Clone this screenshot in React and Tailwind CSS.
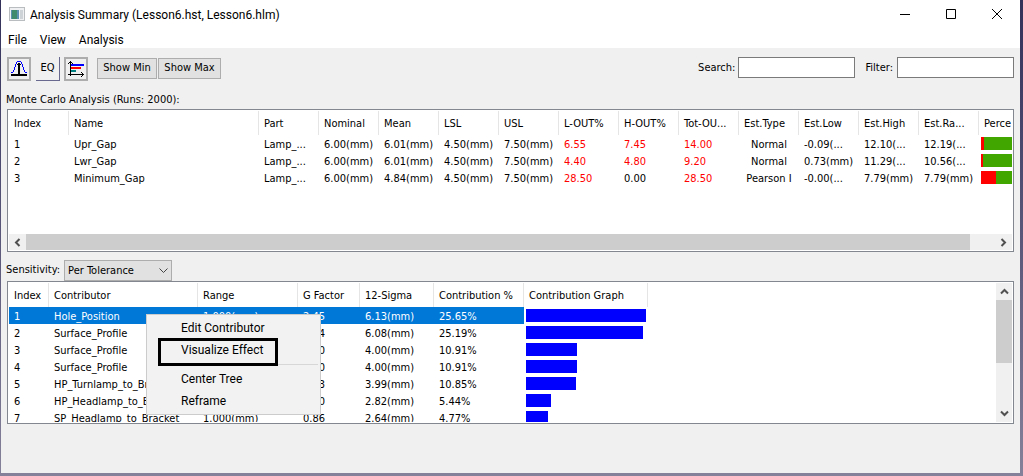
import { useState } from "react";

const ANALYSIS_COLUMNS = [
  { key: "index", header: "Index", width: 60 },
  { key: "name", header: "Name", width: 190 },
  { key: "part", header: "Part", width: 60 },
  { key: "nominal", header: "Nominal", width: 60 },
  { key: "mean", header: "Mean", width: 60 },
  { key: "lsl", header: "LSL", width: 60 },
  { key: "usl", header: "USL", width: 60 },
  { key: "lOut", header: "L-OUT%", width: 60, alert: true },
  { key: "hOut", header: "H-OUT%", width: 60, alert: true },
  { key: "totOut", header: "Tot-OU...", width: 60, alert: true },
  { key: "type", header: "Est.Type", width: 60, center: true },
  { key: "low", header: "Est.Low", width: 60 },
  { key: "high", header: "Est.High", width: 60 },
  { key: "range", header: "Est.Ra...", width: 60 },
  { key: "percent", header: "Perce", width: 60 },
];

const ANALYSIS_ROWS = [
  {
    index: 1, name: "Upr_Gap", part: "Lamp_...", nominal: "6.00(mm)", mean: "6.01(mm)",
    lsl: "4.50(mm)", usl: "7.50(mm)", lOut: "6.55", hOut: "7.45", totOut: "14.00",
    type: "Normal", low: "-0.09(...", high: "12.10(...", range: "12.19(...", bad: 3,
  },
  {
    index: 2, name: "Lwr_Gap", part: "Lamp_...", nominal: "6.00(mm)", mean: "6.01(mm)",
    lsl: "4.50(mm)", usl: "7.50(mm)", lOut: "4.40", hOut: "4.80", totOut: "9.20",
    type: "Normal", low: "0.73(mm)", high: "11.29(...", range: "10.56(...", bad: 2,
  },
  {
    index: 3, name: "Minimum_Gap", part: "Lamp_...", nominal: "6.00(mm)", mean: "4.84(mm)",
    lsl: "4.50(mm)", usl: "7.50(mm)", lOut: "28.50", hOut: "0.00", totOut: "28.50",
    type: "Pearson I", low: "-0.00(...", high: "7.79(mm)", range: "7.79(mm)", bad: 15,
  },
];

const SENSITIVITY_COLUMNS = [
  { key: "index", header: "Index", width: 40 },
  { key: "contributor", header: "Contributor", width: 149 },
  { key: "range", header: "Range", width: 100 },
  { key: "gFactor", header: "G Factor", width: 62 },
  { key: "sigma", header: "12-Sigma", width: 74 },
  { key: "contribution", header: "Contribution %", width: 90 },
  { key: "graph", header: "Contribution Graph", width: 124 },
];

const SENSITIVITY_ROWS = [
  { index: 1, contributor: "Hole_Position", range: "1.000(mm)", gFactor: "2.45", sigma: "6.13(mm)", contribution: "25.65%", bar: 120 },
  { index: 2, contributor: "Surface_Profile", range: "1.000(mm)", gFactor: "2.14", sigma: "6.08(mm)", contribution: "25.19%", bar: 117 },
  { index: 3, contributor: "Surface_Profile", range: "1.000(mm)", gFactor: "2.00", sigma: "4.00(mm)", contribution: "10.91%", bar: 51 },
  { index: 4, contributor: "Surface_Profile", range: "1.000(mm)", gFactor: "2.00", sigma: "4.00(mm)", contribution: "10.91%", bar: 51 },
  { index: 5, contributor: "HP_Turnlamp_to_Bracket", range: "1.000(mm)", gFactor: "1.33", sigma: "3.99(mm)", contribution: "10.85%", bar: 50 },
  { index: 6, contributor: "HP_Headlamp_to_Bracket", range: "1.000(mm)", gFactor: "1.00", sigma: "2.82(mm)", contribution: "5.44%", bar: 25 },
  { index: 7, contributor: "SP_Headlamp_to_Bracket", range: "1.000(mm)", gFactor: "0.86", sigma: "2.64(mm)", contribution: "4.77%", bar: 22 },
];

const MENU_FONT = "font-[Roboto,'Open_Sans',sans-serif]";
const TOOL_BUTTON = "flex h-6 w-6 items-center justify-center border-2 border-[#adadad] bg-[#f0f0f0]";
const PUSH_BUTTON = "mt-px h-[21px] border border-[#adadad] bg-[#e1e1e1] text-center";
const TEXT_FIELD = "h-[21px] w-[117px] border border-[#7a7a7a] bg-white px-1";
const HEADER_CELL = "h-6 overflow-hidden whitespace-nowrap border-r border-[#e5e5e5] pt-[2px] pl-[5px] text-left font-normal";
const DATA_CELL = "h-[17px] overflow-hidden whitespace-nowrap pt-[2px] leading-[15px]";

function WindowIcon() {
  return (
    <svg width="16" height="14" viewBox="0 0 16 14" aria-hidden="true" shapeRendering="crispEdges">
      <rect width="16" height="14" fill="#b9bdc0" />
      <rect x="1" y="1" width="14" height="12" fill="#eef0f1" />
      <rect x="2" y="3" width="8" height="9" fill="#5a8fb0" />
      <rect x="3" y="3" width="5" height="9" fill="#3f8a6c" />
      <rect x="11" y="3" width="3" height="9" fill="#cdd3d6" />
    </svg>
  );
}

function CurveIcon() {
  return (
    <svg width="18" height="18" viewBox="0 0 18 18" fill="none" aria-hidden="true" shapeRendering="crispEdges">
      <path d="M1 12h2v1H1zM3 10h1v2H3zM4 7h1v3H4zM5 4h1v3H5zM6 2h1v2H6zM7 1h4v1H7zM11 2h1v2h-1zM12 4h1v3h-1zM13 7h1v3h-1zM14 10h1v2h-1zM15 12h2v1h-2z" fill="#0000ff" />
      <path d="M8 3h2v11H8zM7 4h4v1H7z" fill="#000" />
      <path d="M1 14h16v2H1z" fill="#000" />
    </svg>
  );
}

function BarsIcon() {
  return (
    <svg width="18" height="18" viewBox="0 0 18 18" fill="none" aria-hidden="true" shapeRendering="crispEdges">
      <path d="M3 1h1v15H3zM2 2h3v1H2zM1 3h1v1H1zM5 3h1v1H5z" fill="#000" />
      <path d="M1 14h16v1H1zM15 13h1v3h-1zM14 12h1v1h-1zM14 16h1v1h-1z" fill="#000" />
      <path d="M4 4h13v2H4z" fill="#0000ff" />
      <path d="M4 7h10v2H4z" fill="#ff0000" />
      <path d="M4 10h5v2H4z" fill="#008080" />
    </svg>
  );
}

function Chevron({ d }) {
  return (
    <svg width="9" height="9" viewBox="0 0 9 9" fill="none" aria-hidden="true">
      <path d={d} stroke="#505050" strokeWidth="2" />
    </svg>
  );
}

function TitleBar() {
  return (
    <header className={`flex h-7 items-center pl-2 text-[12px] ${MENU_FONT}`}>
      <WindowIcon />
      <h1 className="flex-1 pt-[2px] pl-[5px]">Analysis Summary (Lesson6.hst, Lesson6.hlm)</h1>
      <button type="button" aria-label="Minimize" className="flex h-full w-[46px] items-center justify-center">
        <svg width="10" height="10" viewBox="0 0 10 10"><path d="M0 5.500h10" stroke="#000" /></svg>
      </button>
      <button type="button" aria-label="Maximize" className="flex h-full w-[46px] items-center justify-center">
        <svg width="10" height="10" viewBox="0 0 10 10" fill="none"><path d="M.5.5h9v9h-9z" stroke="#000" /></svg>
      </button>
      <button type="button" aria-label="Close" className="flex h-full w-[46px] items-center justify-center">
        <svg width="10" height="10" viewBox="0 0 10 10"><path d="M0 0l10 10M10 0L0 10" stroke="#000" /></svg>
      </button>
    </header>
  );
}

function MenuBar() {
  return (
    <nav className={`flex h-5 items-center gap-[13px] pt-[5px] pb-px pl-[7px] text-[12px] ${MENU_FONT}`}>
      <button type="button">File</button>
      <button type="button">View</button>
      <button type="button">Analysis</button>
    </nav>
  );
}

function Toolbar() {
  return (
    <div className="flex h-[42px] items-start px-[6px] pt-[9px]">
      <button type="button" aria-label="Distribution" className={TOOL_BUTTON}>
        <CurveIcon />
      </button>
      <button type="button" className="ml-[5px] h-6 w-6 border-r border-b border-[#696990]">EQ</button>
      <button type="button" aria-label="Contribution bars" className={`ml-1 ${TOOL_BUTTON}`}>
        <BarsIcon />
      </button>
      <button type="button" className={`ml-[9px] w-[60px] ${PUSH_BUTTON}`}>Show Min</button>
      <button type="button" className={`ml-px w-[63px] ${PUSH_BUTTON}`}>Show Max</button>
      <label htmlFor="search" className="ml-auto leading-[21px]">Search:</label>
      <input id="search" type="text" className={`ml-[3px] ${TEXT_FIELD}`} />
      <label htmlFor="filter" className="ml-[10px] leading-[21px]">Filter:</label>
      <input id="filter" type="text" className={`ml-1 ${TEXT_FIELD}`} />
    </div>
  );
}

function ColumnWidths({ columns }) {
  return (
    <colgroup>
      {columns.map((col) => (
        <col key={col.key} style={{ width: col.width }} />
      ))}
    </colgroup>
  );
}

function AnalysisTable() {
  return (
    <div className="mx-[6px] flex h-[143px] flex-col border border-[#828790] bg-white p-px">
      <div className="min-h-0 flex-1 overflow-hidden">
        <table className="w-[1030px] table-fixed border-separate border-spacing-0">
          <ColumnWidths columns={ANALYSIS_COLUMNS} />
          <thead>
            <tr>
              {ANALYSIS_COLUMNS.map((col) => (
                <th key={col.key} className={HEADER_CELL}>{col.header}</th>
              ))}
            </tr>
          </thead>
          <tbody>
            {ANALYSIS_ROWS.map((row) => (
              <tr key={row.index}>
                {ANALYSIS_COLUMNS.map((col) =>
                  col.key === "percent" ? (
                    <td key={col.key} className="h-[17px] py-0 pl-[2px]">
                      <div className="flex h-[13px] bg-[#42a600]">
                        <div className="bg-[#ff0000]" style={{ width: row.bad }} />
                      </div>
                    </td>
                  ) : (
                    <td
                      key={col.key}
                      className={`${DATA_CELL} ${col.center ? "px-[2px] text-center" : "pl-[5px]"} ${
                        col.alert && row[col.key] !== "0.00" ? "text-[#ff0000]" : ""
                      }`}
                    >
                      {row[col.key]}
                    </td>
                  )
                )}
              </tr>
            ))}
          </tbody>
        </table>
      </div>
      <div className="flex h-4 shrink-0 items-stretch bg-[#f0f0f0]">
        <button type="button" aria-label="Scroll left" className="flex w-[17px] items-center justify-center">
          <Chevron d="M6.500 1L3 4.500 6.500 8" />
        </button>
        <div className="mr-[25px] flex-1 bg-[#cdcdcd]" />
        <button type="button" aria-label="Scroll right" className="flex w-[17px] items-center justify-center">
          <Chevron d="M2.500 1L6 4.500 2.500 8" />
        </button>
      </div>
    </div>
  );
}

function ContextMenu() {
  const item = "block h-[22px] w-full pl-[34px] text-left";
  return (
    <div
      role="menu"
      className={`absolute top-[32px] left-[138px] w-[175px] border border-[#cccccc] bg-[#f2f2f2] py-[2px] text-[12px] ${MENU_FONT}`}
    >
      <button type="button" role="menuitem" className={item}>Edit Contributor</button>
      <button type="button" role="menuitem" className={item}>Visualize Effect</button>
      <div className="mr-[2px] mb-[3px] ml-[34px] h-1 border-b border-[#d7d7d7]" />
      <button type="button" role="menuitem" className={item}>Center Tree</button>
      <button type="button" role="menuitem" className={item}>Reframe</button>
      <div className="pointer-events-none absolute top-[23px] left-[11px] h-7 w-[120px] border-3 border-black" />
    </div>
  );
}

function SensitivityTable() {
  const [selected, setSelected] = useState(1);

  return (
    <div className="relative mx-[6px] flex h-[143px] border border-[#828790] bg-white p-px">
      <div className="min-w-0 flex-1 overflow-hidden">
        <table className="w-[639px] table-fixed border-separate border-spacing-0">
          <ColumnWidths columns={SENSITIVITY_COLUMNS} />
          <thead>
            <tr>
              {SENSITIVITY_COLUMNS.map((col) => (
                <th key={col.key} className={HEADER_CELL}>{col.header}</th>
              ))}
            </tr>
          </thead>
          <tbody>
            {SENSITIVITY_ROWS.map((row) => (
              <tr key={row.index} onClick={() => setSelected(row.index)}>
                {SENSITIVITY_COLUMNS.map((col) =>
                  col.key === "graph" ? (
                    <td key={col.key} className="h-[17px] py-0 pl-[2px]">
                      <div className="h-[13px] bg-[#0000ff]" style={{ width: row.bar }} />
                    </td>
                  ) : (
                    <td
                      key={col.key}
                      className={`pl-[5px] ${DATA_CELL} ${selected === row.index ? "bg-[#0078d7] text-white" : ""}`}
                    >
                      {row[col.key]}
                    </td>
                  )
                )}
              </tr>
            ))}
          </tbody>
        </table>
      </div>
      <div className="flex w-4 shrink-0 flex-col bg-[#f0f0f0]">
        <button type="button" aria-label="Scroll up" className="flex h-[17px] items-center justify-center">
          <Chevron d="M1 6.500L4.500 3 8 6.500" />
        </button>
        <div className="flex-1">
          <div className="h-[60%] bg-[#cdcdcd]" />
        </div>
        <button type="button" aria-label="Scroll down" className="flex h-[17px] items-center justify-center">
          <Chevron d="M1 2.500L4.500 6 8 2.500" />
        </button>
      </div>
      <ContextMenu />
    </div>
  );
}

export default function App() {
  return (
    <div className="flex min-h-screen flex-col bg-linear-to-b from-[#33305a] to-[#85819a] pr-[3px] pb-[3px] pl-px font-['DejaVu_Sans_Condensed','DejaVu_Sans',sans-serif] text-[11px] text-black">
      <div className="bg-white">
        <TitleBar />
        <MenuBar />
      </div>
      <main className="flex-1 bg-[#f0f0f0]">
        <Toolbar />
        <h2 className="h-[19px] pl-[5px] leading-[20px]">Monte Carlo Analysis (Runs: 2000):</h2>
        <AnalysisTable />
        <div className="flex h-[29px] items-center pt-2 pl-[5px]">
          <label htmlFor="sensitivity">Sensitivity:</label>
          <div className="relative ml-1">
            <select
              id="sensitivity"
              className="h-[21px] w-[108px] appearance-none border border-[#adadad] bg-[#e1e1e1] pt-[2px] pl-[3px]"
            >
              <option>Per Tolerance</option>
            </select>
            <svg className="pointer-events-none absolute top-2 right-1" width="9" height="6" viewBox="0 0 9 6" fill="none">
              <path d="M.5.5l4 4 4-4" stroke="#444" />
            </svg>
          </div>
        </div>
        <SensitivityTable />
      </main>
    </div>
  );
}
